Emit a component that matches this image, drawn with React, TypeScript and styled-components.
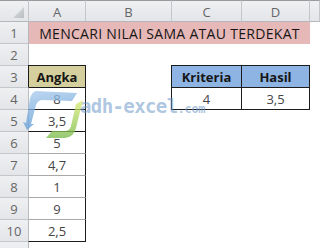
import React from 'react';
import styled, {createGlobalStyle, css} from "styled-components";

const BLACK = '#1c1c1c';
const SEP = '#a9a9a9';
const HEAD_EDGE = '#c3c7cc';

type Edge = { t: string, r: string, b: string, l: string };

type Kind = 'title' | 'angkaHead' | 'angka' | 'tblHead' | 'tbl' | 'empty';

type CellSpec = {
    kind: Kind,
    text?: string,
    span?: number,
    edge?: Edge,
}

const all = (c: string): Edge => ({t: c, r: c, b: c, l: c});

const angka = ['8', '3,5', '5', '4,7', '1', '9', '2,5'];

const angkaCell = (text: string, i: number): CellSpec => ({
    kind: 'angka',
    text,
    edge: {
        t: i <= 2 ? BLACK : SEP,
        r: BLACK,
        b: i <= 1 || i === 6 ? BLACK : SEP,
        l: '#b9bdc2',
    },
});

const empty: CellSpec = {kind: 'empty'};

const rows: CellSpec[][] = [
    [{kind: 'title', text: 'MENCARI NILAI SAMA ATAU TERDEKAT', span: 4}, empty],
    [empty, empty, empty, empty, empty],
    [
        {kind: 'angkaHead', text: 'Angka', edge: all(BLACK)},
        empty,
        {kind: 'tblHead', text: 'Kriteria', edge: all(BLACK)},
        {kind: 'tblHead', text: 'Hasil', edge: all(BLACK)},
        empty,
    ],
    [angkaCell(angka[0], 0), empty, {kind: 'tbl', text: '4', edge: all(BLACK)}, {kind: 'tbl', text: '3,5', edge: all(BLACK)}, empty],
    ...angka.slice(1).map((v, i) => [angkaCell(v, i + 1), empty, empty, empty, empty]),
    [],
];

const fills: Record<Kind, string> = {
    title: '#e6b8b7',
    angkaHead: '#d5cf9e',
    angka: '#ffffff',
    tblHead: '#8db4e2',
    tbl: '#ffffff',
    empty: 'transparent',
};

export default function App() {
    return (
        <>
            <GlobalStyle/>
            <Sheet>
                <Corner/>
                {['A', 'B', 'C', 'D', ''].map((c, i) => <ColHead key={i}>{c}</ColHead>)}
                {rows.map((row, r) => (
                    <React.Fragment key={r}>
                        <RowHead>{r + 1}</RowHead>
                        {row.map((cell, c) => (
                            <Cell key={c} $span={cell.span} $bg={fills[cell.kind]} $kind={cell.kind} $edge={cell.edge}>
                                {cell.text}
                            </Cell>
                        ))}
                        {row.length === 0 && <Cell $span={5} $bg="transparent" $kind="empty"/>}
                    </React.Fragment>
                ))}
                <Watermark>
                    <Logo viewBox="0 0 64 52" width={64} height={52}>
                        <defs>
                            <linearGradient id="blueG" x1="0" y1="0" x2="0.3" y2="1">
                                <stop offset="0" stopColor="#a9cbec"/>
                                <stop offset="1" stopColor="#5b98d4"/>
                            </linearGradient>
                            <linearGradient id="greenG" x1="0" y1="0" x2="0" y2="1">
                                <stop offset="0" stopColor="#dcec72"/>
                                <stop offset="1" stopColor="#74b846"/>
                            </linearGradient>
                        </defs>
                        <path d="M14 2 L55 4 L50 12 L21 11 Q16 11 14 16 L9 35 L12 35 L5 41 L1 33 L4 34 L8 9 Q10 3 14 2 Z"
                              fill="url(#blueG)" opacity="0.75"/>
                        <path d="M61 11 L54 39 Q52 48 43 49 L24 49 L30 42 L44 42 Q48 41 49 37 L54 15 Z"
                              fill="url(#greenG)" opacity="0.75"/>
                    </Logo>
                    <Brand>adh-excel<small>.com</small></Brand>
                </Watermark>
            </Sheet>
        </>
    );
}

const GlobalStyle = createGlobalStyle`
    body {
        margin: 0;
        background: #ffffff;
    }
`

const Sheet = styled.div`
    position: relative;
    display: grid;
    grid-template-columns: 29px 57px 86px 70px 68px 1fr;
    grid-auto-rows: 22px;
    width: 320px;
    height: 248px;
    overflow: hidden;
    font-family: "Open Sans", "Liberation Sans", sans-serif;
    background: #ffffff;
`

const headBg = css`
    background: linear-gradient(#eef0f2, #e3e5e8);
    box-sizing: border-box;
    color: #666666;
    font-size: 13px;
    display: flex;
    align-items: center;
    justify-content: center;
`

const Corner = styled.div`
    ${headBg};
    position: relative;
    border-top: 1px solid #9b9b9b;
    border-right: 1px solid ${HEAD_EDGE};
    border-bottom: 1px solid #b4b8bd;

    &::after {
        content: "";
        position: absolute;
        right: 4px;
        bottom: 3px;
        width: 11px;
        height: 11px;
        background: linear-gradient(135deg, #e0e2e5, #b9bcc0);
        clip-path: polygon(100% 0, 100% 100%, 0 100%);
    }
`

const ColHead = styled.div`
    ${headBg};
    border-top: 1px solid #9b9b9b;
    border-right: 1px solid ${HEAD_EDGE};
    border-bottom: 1px solid #b4b8bd;
    padding-top: 1px;
`

const RowHead = styled.div`
    ${headBg};
    border-right: 1px solid #b4b8bd;
    border-bottom: 1px solid ${HEAD_EDGE};
`

const Cell = styled.div<{ $span?: number, $bg: string, $kind: Kind, $edge?: Edge }>`
    grid-column: span ${p => p.$span ?? 1};
    display: flex;
    align-items: center;
    justify-content: center;
    box-sizing: border-box;
    background: ${p => p.$bg};
    font-size: ${p => p.$kind === 'title' ? 14 : 13}px;
    letter-spacing: ${p => p.$kind === 'title' ? 0.3 : 0}px;
    font-weight: ${p => p.$kind === 'angkaHead' || p.$kind === 'tblHead' ? 700 : 400};
    color: ${p => p.$kind === 'angka' || p.$kind === 'tbl' ? '#454545' : '#161616'};
    padding-top: 1px;
    ${p => p.$edge && css`
        position: relative;
        margin: -1px 0 0 -1px;
        border-style: solid;
        border-width: 1px;
        border-color: ${p.$edge.t} ${p.$edge.r} ${p.$edge.b} ${p.$edge.l};
    `}
`

const Watermark = styled.div`
    position: absolute;
    left: 22px;
    top: 89px;
    display: flex;
    align-items: flex-start;
    pointer-events: none;
    z-index: 2;
`

const Logo = styled.svg`
    display: block;
    flex: none;
`

const Brand = styled.div`
    margin: 6px 0 0 -6px;
    font-family: "DejaVu Sans Mono", monospace;
    font-weight: 700;
    font-size: 19px;
    letter-spacing: -0.6px;
    color: rgba(105, 150, 198, 0.55);

    small {
        font-size: 12px;
        letter-spacing: -0.3px;
    }
`
